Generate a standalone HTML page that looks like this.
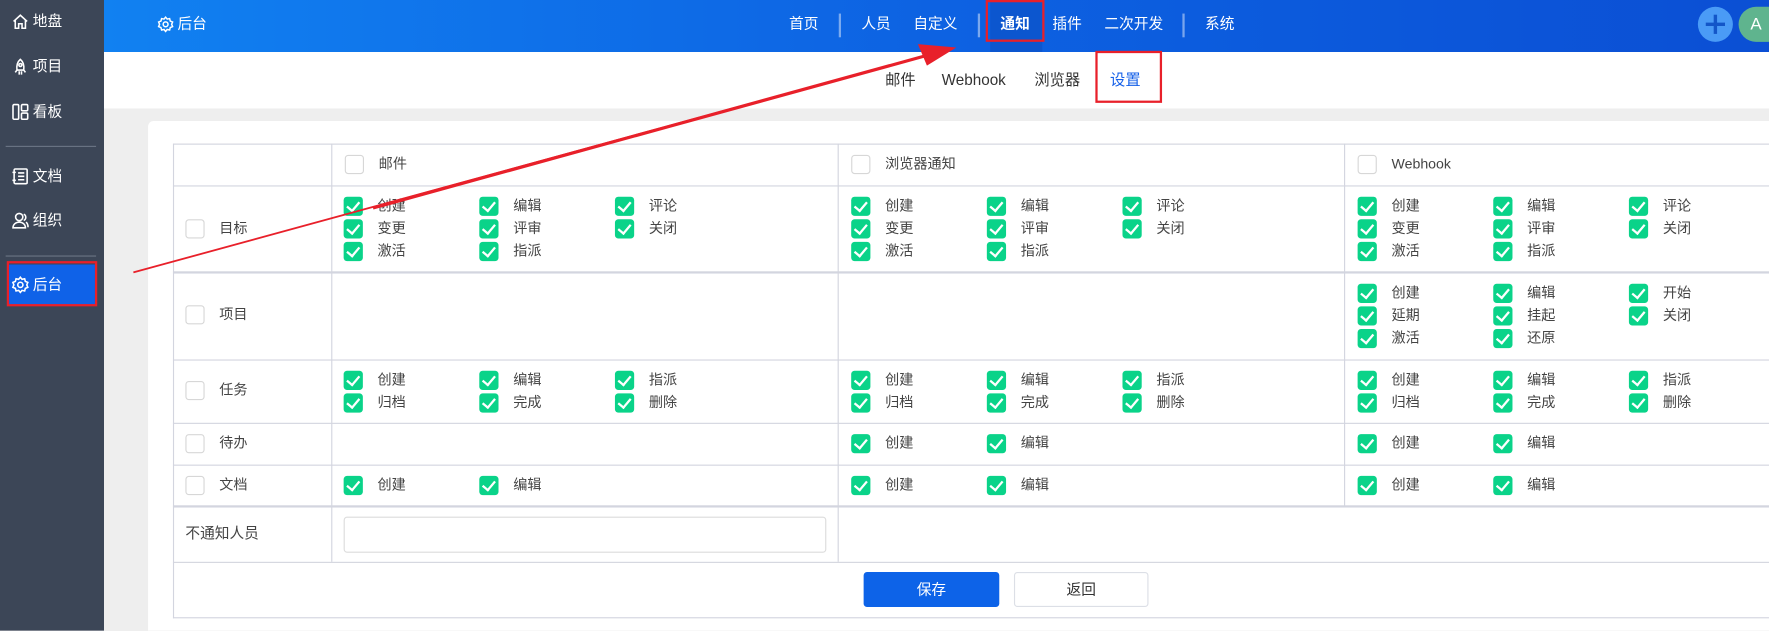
<!DOCTYPE html>
<html><head><meta charset="utf-8">
<style>
*{margin:0;padding:0;box-sizing:border-box}
html,body{width:1769px;height:631px;overflow:hidden;background:#eee}
body{font-family:"Liberation Sans","Noto Sans CJK SC",sans-serif}
#clip{position:relative;width:1769px;height:631px;overflow:hidden}
#w{position:absolute;left:0;top:0;width:1565px;height:558px;transform:scale(1.1304);transform-origin:0 0;background:#eee;font-size:13px;color:#333;overflow:hidden}
.a{position:absolute}
#side{left:0;top:0;width:92px;height:558px;background:#3c4657}
.si{position:absolute;left:10px;color:#fff;font-size:13px;display:flex;align-items:center;gap:3px;height:20px;line-height:20px}
.si svg{width:16px;height:16px}
.dv{position:absolute;left:5px;width:80px;height:1px;background:#6b7484}
#top{left:92px;top:0;width:1473px;height:46px;background:linear-gradient(90deg,#1181f1,#0d62e2 50%,#0b4fd4)}
.nv{position:absolute;top:11px;color:#fff;font-size:13px;line-height:20px;height:20px}
.sp{position:absolute;top:12px;width:2px;height:21px;background:rgba(255,255,255,.45)}
#sub{left:92px;top:46px;width:1473px;height:50px;background:#fff}
.sb{position:absolute;top:15px;font-size:13.5px;color:#333;line-height:20px;height:20px}
#card{left:131px;top:107px;width:1434px;height:451px;background:#fff;border-radius:5px 0 0 0}
.hl{position:absolute;left:153px;width:1412px;height:1px;background:#d3d5df}
.vl{position:absolute;width:1px;background:#d3d5df}
.it{position:absolute;display:flex;align-items:center;height:18px;line-height:18px;font-size:12.5px;color:#444}
.it i{display:block;flex:none;width:17px;height:17px;border-radius:3px;background:#0ad389;position:relative;margin-right:13px}
.it i:after{content:"";position:absolute;left:5px;top:2px;width:5px;height:9px;border:solid #fff;border-width:0 2.2px 2.2px 0;transform:rotate(40deg)}
.it.u i{background:#fff;border:1.5px solid #d7d7d7}
.it.u i:after{display:none}
.lb{position:absolute;font-size:13px;color:#444;line-height:18px}
.rb{position:absolute;border:2px solid #e8202a}
</style></head><body>
<div id="clip">
<div id="w">
<div class="a" id="side">
 <div class="si" style="top:9px"><svg viewBox="0 0 16 16" fill="none" stroke="#fff" stroke-width="1.4"><path d="M2 8L8 2.5 14 8M3.5 6.8V14h3v-4h3v4h3V6.8"/></svg>地盘</div>
 <div class="si" style="top:49px"><svg viewBox="0 0 16 16" fill="none" stroke="#fff" stroke-width="1.4"><path d="M8 1.5C5 4 4.5 7 5 11h6c.5-4 0-7-3-9.5zM5 11l-1.5 2M11 11l1.5 2M7 12v3M9 12v3"/><circle cx="8" cy="6.5" r="1.3"/></svg>项目</div>
 <div class="si" style="top:89px"><svg viewBox="0 0 16 16" fill="none" stroke="#fff" stroke-width="1.4"><rect x="1.5" y="1.5" width="5" height="13" rx="1"/><rect x="9" y="1.5" width="5.5" height="5.5" rx="1"/><rect x="9" y="9" width="5.5" height="5.5" rx="1"/></svg>看板</div>
 <div class="dv" style="top:129px"></div>
 <div class="si" style="top:146px"><svg viewBox="0 0 16 16" fill="none" stroke="#fff" stroke-width="1.4"><rect x="2.5" y="1.5" width="11.5" height="13" rx="1"/><path d="M6 5h5.5M6 8h5.5M6 11h5.5M1 4.5h3M1 11.5h3"/></svg>文档</div>
 <div class="si" style="top:185px"><svg viewBox="0 0 16 16" fill="none" stroke="#fff" stroke-width="1.4"><circle cx="7" cy="5" r="3.2"/><path d="M1.5 14.5c0-3 2.5-5 5.5-5s5.5 2 5.5 5zM11 2.5a3 3 0 010 5.5M13 9.5c1.2.8 1.8 2.5 1.8 4.5"/></svg>组织</div>
 <div class="dv" style="top:226px"></div>
 <div class="a" style="left:8px;top:234px;width:76px;height:36px;background:#0f62e8"></div>
 <div class="si" style="top:242px"><svg viewBox="0 0 16 16" fill="none" stroke="#fff" stroke-width="1.4"><circle cx="8" cy="8" r="2.3"/><path d="M8 1.3l1.5 1.8 2.3-.5.6 2.3 2.2.9-.9 2.2.9 2.2-2.2.9-.6 2.3-2.3-.5L8 14.7l-1.5-1.8-2.3.5-.6-2.3-2.2-.9.9-2.2-.9-2.2 2.2-.9.6-2.3 2.3.5z"/></svg>后台</div>
 <div class="rb" style="left:6px;top:231px;width:80px;height:40px"></div>
</div>
<div class="a" id="top">
 <div class="nv" style="left:47px;display:flex;align-items:center;gap:3px"><svg width="15" height="15" viewBox="0 0 16 16" fill="none" stroke="#fff" stroke-width="1.4"><circle cx="8" cy="8" r="2.3"/><path d="M8 1.3l1.5 1.8 2.3-.5.6 2.3 2.2.9-.9 2.2.9 2.2-2.2.9-.6 2.3-2.3-.5L8 14.7l-1.5-1.8-2.3.5-.6-2.3-2.2-.9.9-2.2-.9-2.2 2.2-.9.6-2.3 2.3.5z"/></svg>后台</div>
 <div class="nv" style="left:606px">首页</div>
 <div class="sp" style="left:650px"></div>
 <div class="nv" style="left:670px">人员</div>
 <div class="nv" style="left:716px">自定义</div>
 <div class="sp" style="left:773px"></div>
 <div class="a" style="left:784px;top:0;width:46px;height:46px;background:#0c56cf"></div>
 <div class="nv" style="left:793px;font-weight:bold">通知</div>
 <div class="nv" style="left:839px">插件</div>
 <div class="nv" style="left:885px">二次开发</div>
 <div class="sp" style="left:954px"></div>
 <div class="nv" style="left:974px">系统</div>
 <div class="a" style="left:1410px;top:6px;width:31px;height:31px;border-radius:50%;background:#4a9bf6"></div>
 <div class="a" style="left:1424px;top:13px;width:3px;height:17px;background:#1356c8"></div>
 <div class="a" style="left:1417px;top:20px;width:17px;height:3px;background:#1356c8"></div>
 <div class="a" style="left:1446px;top:6px;width:27px;height:31px;border-radius:16px 0 0 16px;background:#5fb48e;color:#fff;font-size:15px;text-align:center;line-height:31px;padding-left:4px">A</div>
</div>
<div class="rb" style="left:872px;top:0;width:52px;height:37px"></div>
<div class="a" id="sub">
 <div class="sb" style="left:691px">邮件</div>
 <div class="sb" style="left:741px">Webhook</div>
 <div class="sb" style="left:823px">浏览器</div>
 <div class="sb" style="left:890px;color:#1560e8">设置</div>
</div>
<div class="rb" style="left:969px;top:45px;width:59px;height:46px"></div>
<div class="a" id="card"></div>
<div class="hl" style="top:127px"></div>
<div class="hl" style="top:164px"></div>
<div class="hl" style="top:240px;height:2px"></div>
<div class="hl" style="top:318px"></div>
<div class="hl" style="top:374px"></div>
<div class="hl" style="top:411px"></div>
<div class="hl" style="top:447px;height:2px"></div>
<div class="hl" style="top:497px"></div>
<div class="hl" style="top:546px"></div>
<div class="vl" style="left:153px;top:127px;height:420px"></div>
<div class="vl" style="left:293px;top:127px;height:370px"></div>
<div class="vl" style="left:741px;top:127px;height:370px"></div>
<div class="vl" style="left:1189px;top:127px;height:321px"></div>
<div class="it u" style="left:305px;top:136px"><i></i>邮件</div>
<div class="it u" style="left:753px;top:136px"><i></i>浏览器通知</div>
<div class="it u" style="left:1201px;top:136px"><i></i>Webhook</div>
<div class="it u" style="left:164px;top:193px"><i></i>目标</div>
<div class="it u" style="left:164px;top:269px"><i></i>项目</div>
<div class="it u" style="left:164px;top:336px"><i></i>任务</div>
<div class="it u" style="left:164px;top:383px"><i></i>待办</div>
<div class="it u" style="left:164px;top:420px"><i></i>文档</div>
<div class="it" style="left:304px;top:173px"><i></i>创建</div><div class="it" style="left:424px;top:173px"><i></i>编辑</div><div class="it" style="left:544px;top:173px"><i></i>评论</div>
<div class="it" style="left:304px;top:193px"><i></i>变更</div><div class="it" style="left:424px;top:193px"><i></i>评审</div><div class="it" style="left:544px;top:193px"><i></i>关闭</div>
<div class="it" style="left:304px;top:213px"><i></i>激活</div><div class="it" style="left:424px;top:213px"><i></i>指派</div>
<div class="it" style="left:753px;top:173px"><i></i>创建</div><div class="it" style="left:873px;top:173px"><i></i>编辑</div><div class="it" style="left:993px;top:173px"><i></i>评论</div>
<div class="it" style="left:753px;top:193px"><i></i>变更</div><div class="it" style="left:873px;top:193px"><i></i>评审</div><div class="it" style="left:993px;top:193px"><i></i>关闭</div>
<div class="it" style="left:753px;top:213px"><i></i>激活</div><div class="it" style="left:873px;top:213px"><i></i>指派</div>
<div class="it" style="left:1201px;top:173px"><i></i>创建</div><div class="it" style="left:1321px;top:173px"><i></i>编辑</div><div class="it" style="left:1441px;top:173px"><i></i>评论</div>
<div class="it" style="left:1201px;top:193px"><i></i>变更</div><div class="it" style="left:1321px;top:193px"><i></i>评审</div><div class="it" style="left:1441px;top:193px"><i></i>关闭</div>
<div class="it" style="left:1201px;top:213px"><i></i>激活</div><div class="it" style="left:1321px;top:213px"><i></i>指派</div>
<div class="it" style="left:1201px;top:250px"><i></i>创建</div><div class="it" style="left:1321px;top:250px"><i></i>编辑</div><div class="it" style="left:1441px;top:250px"><i></i>开始</div>
<div class="it" style="left:1201px;top:270px"><i></i>延期</div><div class="it" style="left:1321px;top:270px"><i></i>挂起</div><div class="it" style="left:1441px;top:270px"><i></i>关闭</div>
<div class="it" style="left:1201px;top:290px"><i></i>激活</div><div class="it" style="left:1321px;top:290px"><i></i>还原</div>
<div class="it" style="left:304px;top:327px"><i></i>创建</div><div class="it" style="left:424px;top:327px"><i></i>编辑</div><div class="it" style="left:544px;top:327px"><i></i>指派</div>
<div class="it" style="left:304px;top:347px"><i></i>归档</div><div class="it" style="left:424px;top:347px"><i></i>完成</div><div class="it" style="left:544px;top:347px"><i></i>删除</div>
<div class="it" style="left:753px;top:327px"><i></i>创建</div><div class="it" style="left:873px;top:327px"><i></i>编辑</div><div class="it" style="left:993px;top:327px"><i></i>指派</div>
<div class="it" style="left:753px;top:347px"><i></i>归档</div><div class="it" style="left:873px;top:347px"><i></i>完成</div><div class="it" style="left:993px;top:347px"><i></i>删除</div>
<div class="it" style="left:1201px;top:327px"><i></i>创建</div><div class="it" style="left:1321px;top:327px"><i></i>编辑</div><div class="it" style="left:1441px;top:327px"><i></i>指派</div>
<div class="it" style="left:1201px;top:347px"><i></i>归档</div><div class="it" style="left:1321px;top:347px"><i></i>完成</div><div class="it" style="left:1441px;top:347px"><i></i>删除</div>
<div class="it" style="left:753px;top:383px"><i></i>创建</div><div class="it" style="left:873px;top:383px"><i></i>编辑</div>
<div class="it" style="left:1201px;top:383px"><i></i>创建</div><div class="it" style="left:1321px;top:383px"><i></i>编辑</div>
<div class="it" style="left:304px;top:420px"><i></i>创建</div><div class="it" style="left:424px;top:420px"><i></i>编辑</div>
<div class="it" style="left:753px;top:420px"><i></i>创建</div><div class="it" style="left:873px;top:420px"><i></i>编辑</div>
<div class="it" style="left:1201px;top:420px"><i></i>创建</div><div class="it" style="left:1321px;top:420px"><i></i>编辑</div>
<div class="lb" style="left:164px;top:463px">不通知人员</div>
<div class="a" style="left:304px;top:457px;width:427px;height:32px;border:1px solid #dcdcdc;border-radius:3px;background:#fff"></div>
<div class="a" style="left:764px;top:506px;width:120px;height:31px;background:#0d63e8;border-radius:3px;color:#fff;text-align:center;line-height:31px;font-size:13px">保存</div>
<div class="a" style="left:897px;top:506px;width:119px;height:31px;background:#fff;border:1px solid #dcdfe6;border-radius:3px;color:#333;text-align:center;line-height:29px;font-size:13px">返回</div>
<svg class="a" style="left:0;top:0" width="1565" height="558" viewBox="0 0 1565 558">
 <line x1="118" y1="241" x2="820" y2="49" stroke="#e8202a" stroke-width="1.6"/>
 <line x1="330" y1="184" x2="820" y2="49" stroke="#e8202a" stroke-width="2.8"/>
 <polygon points="846,42 812,39 820,58" fill="#e8202a"/>
</svg>
</div>
</div>
</body></html>
